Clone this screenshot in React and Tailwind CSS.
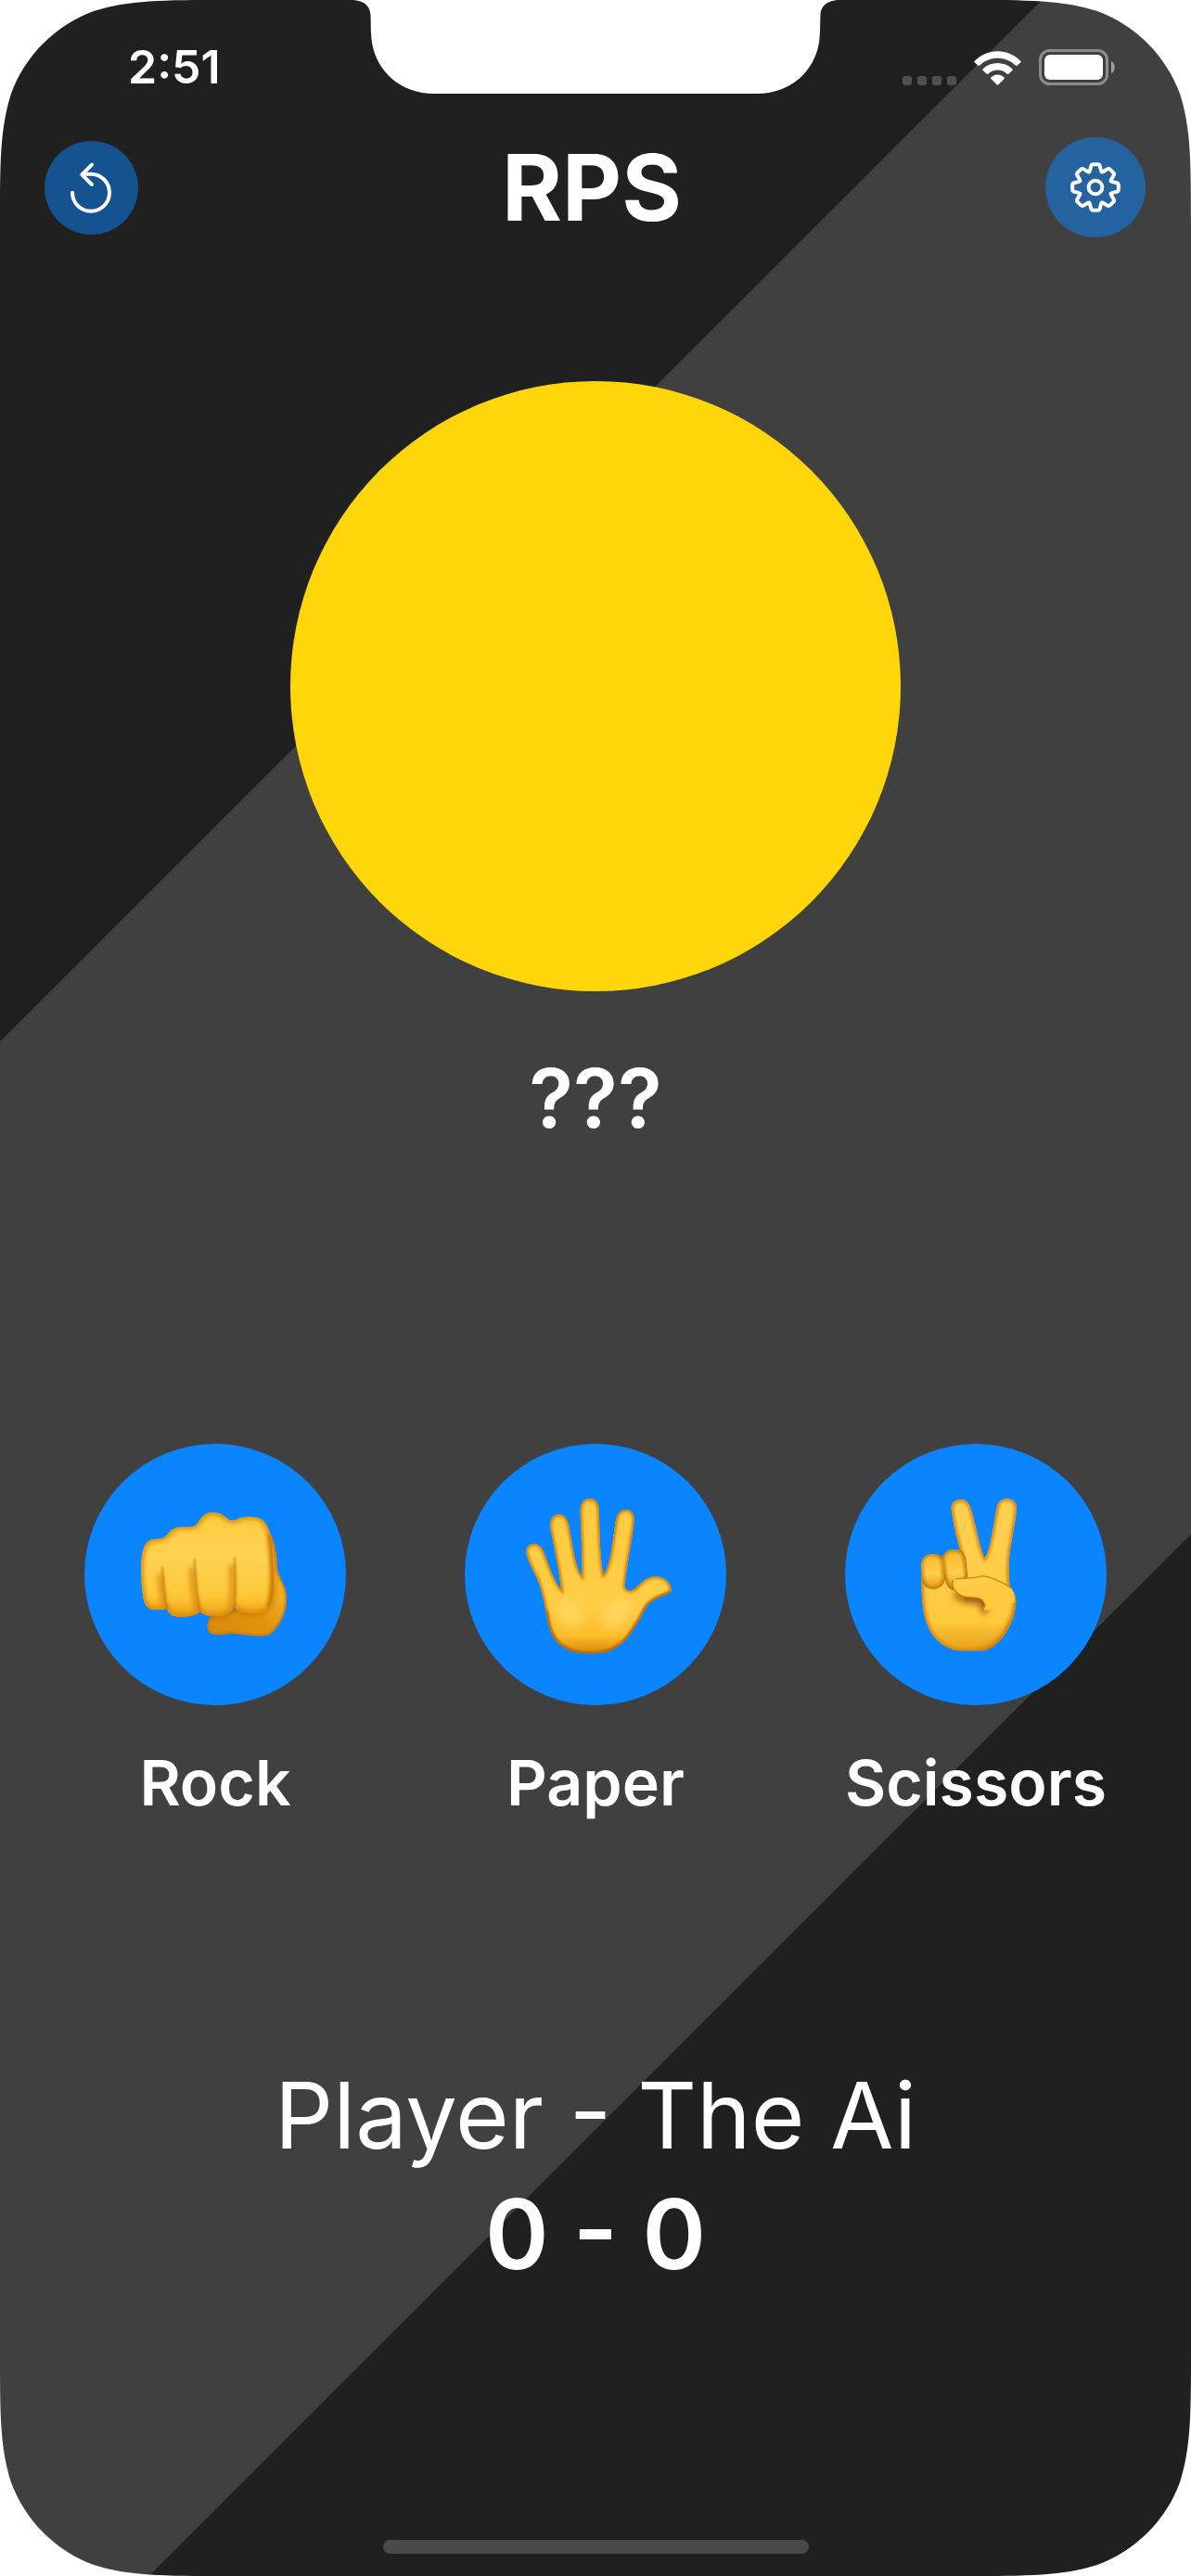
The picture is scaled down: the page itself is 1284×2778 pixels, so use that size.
import React from "react";

const CORNER =
  "M0 0H245C174 0 139 0 101 12C60 27 27 60 12 101C0 139 0 174 0 245Z";

function Corner({ className }) {
  return (
    <svg viewBox="0 0 245 245" className={"pointer-events-none absolute size-[245px] " + className} aria-hidden="true">
      <path d={CORNER} fill="#fff" />
    </svg>
  );
}

function Notch() {
  return (
    <svg viewBox="0 0 508 101" className="absolute top-0 left-1/2 h-[101px] w-[508px] -translate-x-1/2 overflow-visible" aria-hidden="true">
      <path
        fill="#fff"
        d="M-10 0C5 0 11 7 11.500 16C12 28 11.500 34 13 46C18 77 44 101 80 101H428C464 101 490 77 495 46C496.500 34 496 28 496.500 16C497 7 503 0 518 0Z"
      />
    </svg>
  );
}

function Wifi() {
  return (
    <svg viewBox="750 161 153 112" className="h-[37px] w-[51px]" aria-hidden="true">
      <g fill="#fff">
        <path d="M751 194C792 151 861 151 902 194Q904 196 902 198L891 208Q888 210 885 208C852 177 801 177 768 208Q765 210 762 208L751 198Q749 196 751 194Z" />
        <path d="M778 220C805 194 848 194 875 220Q877 222 875 224L863 235Q860 238 857 235C839 219 814 219 796 235Q793 238 790 235L778 224Q776 222 778 220Z" />
        <path d="M805 247C818 235 835 235 848 247Q850 249 848 252L829 271Q826.500 274 824 271L805 252Q803 249 805 247Z" />
      </g>
    </svg>
  );
}

function Battery() {
  return (
    <svg viewBox="0 0 82 39" className="h-[39px] w-[82px]" aria-hidden="true">
      <rect x="1.500" y="1.500" width="72" height="36" rx="10" fill="none" stroke="#fff" strokeOpacity="0.4" strokeWidth="3" />
      <rect x="6" y="6" width="63" height="27" rx="6" fill="#fff" />
      <path d="M78 13C83 15 83 24 78 26Z" fill="#fff" fillOpacity="0.5" />
    </svg>
  );
}

function UndoIcon() {
  return (
    <svg viewBox="144 454 303 303" className="size-full" aria-hidden="true">
      <g fill="none" stroke="#fff" strokeWidth="12" strokeLinecap="round" strokeLinejoin="round">
        <path d="M234 621A60 60 0 1 0 294 561H268" />
        <path d="M297 531L265 563L297 595" />
      </g>
    </svg>
  );
}

/* Outline of an eight-toothed cog with softened corners. */
function cogPath() {
  const pts = [];
  for (let k = 0; k < 8; k++) {
    const a = (k * Math.PI) / 4;
    for (const [x, y] of [[-19, -50], [-13, -74.5], [13, -74.5], [19, -50]]) {
      pts.push([x * Math.cos(a) - y * Math.sin(a), x * Math.sin(a) + y * Math.cos(a)]);
    }
  }
  const n = pts.length;
  const toward = (p, q, d) => {
    const len = Math.hypot(q[0] - p[0], q[1] - p[1]);
    const t = Math.min(d / len, 0.5);
    return [p[0] + (q[0] - p[0]) * t, p[1] + (q[1] - p[1]) * t];
  };
  return (
    pts
      .map((p, i) => {
        const a = toward(p, pts[(i + n - 1) % n], 6);
        const b = toward(p, pts[(i + 1) % n], 6);
        return `${i ? "L" : "M"}${a[0].toFixed(2)} ${a[1].toFixed(2)}Q${p[0].toFixed(2)} ${p[1].toFixed(2)} ${b[0].toFixed(2)} ${b[1].toFixed(2)}`;
      })
      .join("") + "Z"
  );
}
const COG = cogPath();

function GearIcon() {
  return (
    <svg viewBox="-162 -162 324 324" className="size-full" aria-hidden="true">
      <g fill="none" stroke="#fff" strokeWidth="12" strokeLinejoin="round">
        <path d={COG} />
        <circle r="22" />
      </g>
    </svg>
  );
}

const FIST =
  "M106 408C85 406 76 390 72 360C66 320 65 270 68 240C72 205 84 182 106 180C125 179 138 180 150 166C165 145 180 139 205 140C225 140 238 141 250 128C260 108 272 94 298 93C320 93 334 103 346 114C360 122 372 119 384 112C400 106 430 105 448 112C472 122 478 145 484 165C494 220 496 300 494 350C492 390 480 412 450 418C420 422 385 418 368 402C355 420 335 430 312 430C288 430 266 424 258 414C240 428 215 432 190 431C165 430 155 420 150 404C138 408 120 408 106 408Z";
const FIST_THUMB =
  "M478 150C500 185 506 230 507 275C512 305 537 330 537 372C537 410 520 450 495 478C480 494 460 494 440 493C410 492 380 484 350 486C320 490 300 490 290 484C276 474 280 445 290 432L400 400Z";

function RockHand() {
  return (
    <svg viewBox="6 -6 600 600" className="size-[200px]" aria-hidden="true">
      <defs>
        <linearGradient id="rock-fill" x1="0" y1="93" x2="0" y2="431" gradientUnits="userSpaceOnUse">
          <stop offset="0" stopColor="#FFCC40" />
          <stop offset="0.45" stopColor="#FFD253" />
          <stop offset="0.8" stopColor="#FFC838" />
          <stop offset="1" stopColor="#E99F10" />
        </linearGradient>
        <linearGradient id="rock-thumb" x1="290" y1="470" x2="537" y2="350" gradientUnits="userSpaceOnUse">
          <stop offset="0" stopColor="#D98B0A" />
          <stop offset="0.6" stopColor="#DF930D" />
          <stop offset="1" stopColor="#F5B324" />
        </linearGradient>
        <clipPath id="rock-clip"><path d={FIST} /></clipPath>
        <clipPath id="rock-thumb-clip"><path d={FIST_THUMB} /></clipPath>
        <filter id="rock-blur" filterUnits="userSpaceOnUse" x="0" y="0" width="600" height="600"><feGaussianBlur stdDeviation="8" /></filter>
        <filter id="rock-soft" filterUnits="userSpaceOnUse" x="0" y="0" width="600" height="600"><feGaussianBlur stdDeviation="3" /></filter>
      </defs>
      <path d={FIST_THUMB} fill="url(#rock-thumb)" />
      <g clipPath="url(#rock-thumb-clip)" fill="none">
        <path d={FIST_THUMB} stroke="#C97408" strokeWidth="9" filter="url(#rock-soft)" />
        <path d={FIST} stroke="#B86408" strokeWidth="10" opacity="0.6" filter="url(#rock-blur)" />
      </g>
      <path d={FIST} fill="url(#rock-fill)" />
      <g clipPath="url(#rock-clip)" fill="none" strokeLinecap="round">
        <path d={FIST} stroke="#D98806" strokeWidth="16" filter="url(#rock-blur)" />
        <path d="M488 170C498 240 500 330 486 395" stroke="#C06A00" strokeWidth="20" opacity="0.85" filter="url(#rock-blur)" />
        <g stroke="#D88C08" strokeWidth="20" opacity="0.75" filter="url(#rock-blur)">
          <path d="M128 300C130 330 134 370 142 400" />
          <path d="M230 280C233 330 239 380 250 412" />
          <path d="M359 270C361 310 362 360 358 400" />
        </g>
        <g stroke="#B06408" strokeWidth="4" opacity="0.9" filter="url(#rock-soft)">
          <path d="M135 270C138 320 142 370 150 404" />
          <path d="M239 245C242 310 247 380 258 414" />
          <path d="M369 240C371 290 373 350 368 402" />
        </g>
      </g>
    </svg>
  );
}

const PALM =
  "M195 372C190 320 175 250 160 175C157 145 168 130 187 129C206 129 216 145 220 165C232 225 240 300 262 328C264 260 258 180 257 118C257 92 268 78 287 78C306 78 317 92 317 116C320 190 320 270 332 324C354 300 362 210 372 148C376 125 388 114 404 114C422 114 433 128 431 150C424 220 405 300 401 362C404 380 425 380 440 364C460 345 475 329 502 330C530 332 552 350 551 378C545 388 525 390 500 404C470 420 465 440 448 472C425 505 410 540 370 562C345 577 320 580 285 580C240 580 210 570 185 545C155 515 152 475 145 440C138 400 130 370 120 345C105 310 88 285 82 255C79 238 90 224 107 224C122 224 132 235 138 250C155 290 170 345 195 372Z";

function PaperHand() {
  return (
    <svg viewBox="6 24 600 600" className="size-[200px]" aria-hidden="true">
      <defs>
        <linearGradient id="palm-fill" x1="0" y1="78" x2="0" y2="580" gradientUnits="userSpaceOnUse">
          <stop offset="0" stopColor="#FFCB40" />
          <stop offset="0.7" stopColor="#FFCD45" />
          <stop offset="0.88" stopColor="#FBBE2C" />
          <stop offset="1" stopColor="#D98A08" />
        </linearGradient>
        <clipPath id="palm-clip"><path d={PALM} /></clipPath>
        <filter id="palm-blur" x="-20%" y="-20%" width="140%" height="140%"><feGaussianBlur stdDeviation="5" /></filter>
        <filter id="palm-glow" x="-50%" y="-50%" width="200%" height="200%"><feGaussianBlur stdDeviation="16" /></filter>
      </defs>
      <path d={PALM} fill="url(#palm-fill)" />
      <g clipPath="url(#palm-clip)">
        <g fill="#FFDA68" opacity="0.8" filter="url(#palm-glow)">
          <ellipse cx="225" cy="450" rx="32" ry="48" transform="rotate(-30 225 450)" />
          <ellipse cx="375" cy="450" rx="32" ry="55" transform="rotate(40 375 450)" />
        </g>
        <path d={PALM} fill="none" stroke="#CC7A04" strokeWidth="12" filter="url(#palm-blur)" />
        <path d="M551 378C545 388 525 390 500 404C470 420 465 440 448 472C425 505 410 540 370 562C345 577 320 580 285 580C240 580 210 570 185 545C155 515 152 475 145 440" fill="none" stroke="#B86004" strokeWidth="10" filter="url(#palm-blur)" />
      </g>
    </svg>
  );
}

const VICTORY =
  "M101 330C99 400 105 460 125 500C145 540 185 570 230 571H290C330 570 370 530 390 480C405 445 408 415 404 395C400 380 390 370 386 362C382 320 380 290 388 240C396 190 406 140 408 112C408 90 395 79 377 79C357 79 346 92 343 110C334 160 322 250 305 270C292 250 275 160 260 110C252 88 242 81 226 81C205 82 196 95 197 112C203 160 215 210 226 246C200 238 178 246 168 268C155 258 145 259 130 260C110 262 99 275 100 300Z";
const CURL_A = "M134 259C156 259 171 270 171 292L173 335C172 356 158 368 137 368C116 368 104 352 103 332L100 296C100 272 112 259 134 259Z";
const CURL_B = "M204 243C228 243 240 258 242 282L247 334L200 372C184 360 178 345 176 325L169 282C167 258 182 243 204 243Z";
const V_THUMB =
  "M212 338C240 337 270 336 300 329C332 333 362 350 388 365C400 378 404 395 402 415L304 440C306 412 298 400 280 399C245 400 215 392 202 368C196 352 198 340 212 338Z";

function ScissorsHand() {
  return (
    <svg viewBox="-24 24 600 600" className="size-[200px]" aria-hidden="true">
      <defs>
        <linearGradient id="v-fill" x1="0" y1="79" x2="0" y2="571" gradientUnits="userSpaceOnUse">
          <stop offset="0" stopColor="#FFD055" />
          <stop offset="0.8" stopColor="#FFCA3E" />
          <stop offset="1" stopColor="#E8A01A" />
        </linearGradient>
        <linearGradient id="v-curl" x1="0" y1="245" x2="0" y2="370" gradientUnits="userSpaceOnUse">
          <stop offset="0" stopColor="#F8B82A" />
          <stop offset="0.6" stopColor="#FFCE4C" />
          <stop offset="1" stopColor="#E8A018" />
        </linearGradient>
        <linearGradient id="v-thumb" x1="0" y1="335" x2="0" y2="440" gradientUnits="userSpaceOnUse">
          <stop offset="0" stopColor="#FFCF4C" />
          <stop offset="0.45" stopColor="#FFC93F" />
          <stop offset="1" stopColor="#FFCA3E" />
        </linearGradient>
        <clipPath id="v-clip"><path d={VICTORY} /></clipPath>
        <clipPath id="v-clip-a"><path d={CURL_A} /></clipPath>
        <clipPath id="v-clip-b"><path d={CURL_B} /></clipPath>
        <filter id="v-blur" filterUnits="userSpaceOnUse" x="0" y="0" width="600" height="620"><feGaussianBlur stdDeviation="5" /></filter>
        <filter id="v-wide" filterUnits="userSpaceOnUse" x="0" y="0" width="600" height="620"><feGaussianBlur stdDeviation="9" /></filter>
        <filter id="v-soft" filterUnits="userSpaceOnUse" x="0" y="0" width="600" height="620"><feGaussianBlur stdDeviation="2" /></filter>
      </defs>
      <path d={VICTORY} fill="url(#v-fill)" />
      <g clipPath="url(#v-clip)" fill="none" strokeLinecap="round">
        <path d={VICTORY} stroke="#D98A0A" strokeWidth="15" filter="url(#v-blur)" />
        <path d="M412 400C412 470 360 560 290 575" stroke="#CC7C06" strokeWidth="20" opacity="0.7" filter="url(#v-wide)" />
        <path d="M215 392C235 408 262 408 285 410C298 414 302 424 304 440" stroke="#A05C08" strokeWidth="24" opacity="0.8" filter="url(#v-wide)" />
        <path d={CURL_A} stroke="#B06808" strokeWidth="6" filter="url(#v-soft)" />
        <path d={CURL_B} stroke="#B06808" strokeWidth="6" filter="url(#v-soft)" />
      </g>
      <path d={CURL_B} fill="url(#v-curl)" />
      <g clipPath="url(#v-clip-b)">
        <path d={CURL_B} fill="none" stroke="#C97C08" strokeWidth="12" filter="url(#v-blur)" />
      </g>
      <path d={CURL_A} fill="url(#v-curl)" />
      <g clipPath="url(#v-clip-a)">
        <path d={CURL_A} fill="none" stroke="#CF840A" strokeWidth="12" filter="url(#v-blur)" />
      </g>
      <path d={V_THUMB} fill="url(#v-thumb)" filter="url(#v-soft)" />
      <g clipPath="url(#v-clip)" fill="none" strokeLinecap="round">
        <path d="M202 344C194 364 212 392 250 399C280 398 300 402 304 428" stroke="#C07408" strokeWidth="5" opacity="0.8" filter="url(#v-soft)" />
        <path d="M240 404C275 402 296 404 302 424" stroke="#8A4808" strokeWidth="7" opacity="0.75" filter="url(#v-blur)" />
        <path d="M212 338C240 337 270 336 300 329C332 333 362 350 390 367" stroke="#D08410" strokeWidth="4" filter="url(#v-soft)" />
        <path d="M406 380C413 430 396 480 372 515" stroke="#D98A0A" strokeWidth="8" filter="url(#v-blur)" />
      </g>
    </svg>
  );
}

const MOVES = [
  { name: "Rock", Hand: RockHand },
  { name: "Paper", Hand: PaperHand },
  { name: "Scissors", Hand: ScissorsHand },
];

export default function App() {
  return (
    <div className="relative flex min-h-screen flex-col overflow-hidden bg-[linear-gradient(135deg,#202020_27.67%,#404040_27.67%,#404040_72.33%,#202020_72.33%)] font-['Inter',sans-serif] text-white">
      <Corner className="top-0 left-0" />
      <Corner className="top-0 right-0 rotate-90" />
      <Corner className="right-0 bottom-0 rotate-180" />
      <Corner className="bottom-0 left-0 -rotate-90" />
      <Notch />

      <div className="relative flex h-36 items-center justify-between pr-[82px] pl-[138px]">
        <time className="text-[50px] leading-none font-semibold">2:51</time>
        <div className="flex items-end gap-[19px]">
          <div className="flex gap-1.5">
            <span className="size-2.5 rounded-[3px] bg-[#505050]" />
            <span className="size-2.5 rounded-[3px] bg-[#505050]" />
            <span className="size-2.5 rounded-[3px] bg-[#505050]" />
            <span className="size-2.5 rounded-[3px] bg-[#505050]" />
          </div>
          <Wifi />
          <Battery />
        </div>
      </div>

      <header className="relative mt-1 flex items-center justify-between pr-[49px] pl-12">
        <button type="button" aria-label="Restart" className="size-[101px] rounded-full bg-[#0A84FF]/50">
          <UndoIcon />
        </button>
        <h1 className="text-[99px] leading-none font-bold">RPS</h1>
        <button type="button" aria-label="Settings" className="size-[108px] rounded-full bg-[#0A84FF]/50">
          <GearIcon />
        </button>
      </header>

      <main className="flex flex-col">
        <div className="mt-[155px] size-[658px] self-center rounded-full bg-[#FFD60A]" />
        <p className="mt-[59px] text-center text-[88px] leading-[112px] font-semibold">???</p>

        <div className="mt-[317px] flex justify-between px-[91px]">
          {MOVES.map(({ name, Hand }) => (
            <div key={name} className="flex w-[282px] flex-col items-center">
              <button
                type="button"
                aria-labelledby={"move-" + name}
                className="flex size-[282px] items-center justify-center rounded-full bg-[#0A84FF]"
              >
                <Hand />
              </button>
              <span id={"move-" + name} className="mt-[43px] text-[68px] leading-[80px] font-semibold whitespace-nowrap">
                {name}
              </span>
            </div>
          ))}
        </div>

        <section className="mt-[255px] text-center leading-[128px]">
          <h2 className="text-[99px] leading-[128px]">Player - The Ai</h2>
          <p className="text-[104px] leading-[128px] font-semibold">0 - 0</p>
        </section>
      </main>

      <div className="mt-auto mb-6 h-[15px] w-[459px] self-center rounded-full bg-[#4a4a4a]" />
    </div>
  );
}
